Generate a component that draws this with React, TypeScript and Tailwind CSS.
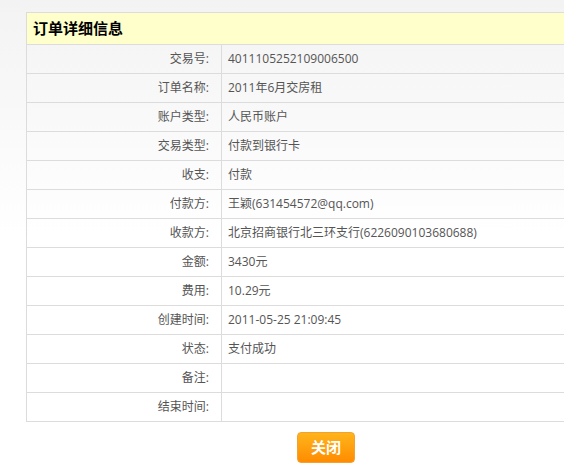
import React from "react"

const rows: [string, string][] = [
	["交易号", "4011105252109006500"],
	["订单名称", "2011年6月交房租"],
	["账户类型", "人民币账户"],
	["交易类型", "付款到银行卡"],
	["收支", "付款"],
	["付款方", "王颖(631454572@qq.com)"],
	["收款方", "北京招商银行北三环支行(6226090103680688)"],
	["金额", "3430元"],
	["费用", "10.29元"],
	["创建时间", "2011-05-25 21:09:45"],
	["状态", "支付成功"],
	["备注", ""],
	["结束时间", ""],
]

export default function App() {
	return (
		<div
			className="w-[564px] h-[475px] overflow-hidden bg-gradient-to-b from-[#f3f3f3] via-white to-white text-[12px] text-[#555]"
			style={{ fontFamily: '"Open Sans", "Noto Sans CJK SC", sans-serif' }}
		>
			<div className="pt-[12px] pl-[26px]">
				{/* detail table */}
				<div className="w-[560px] border-t border-l border-[#dcdcdc]">
					<div className="h-[32px] bg-[#ffffcc] border-b border-[#dcdcdc] flex items-center pl-[6px]">
						<span className="text-[15px] font-bold text-black leading-none">订单详细信息</span>
					</div>
					{rows.map(([label, value]) => (
						<div key={label} className="flex h-[29px] border-b border-[#dcdcdc]">
							<div className="w-[195px] shrink-0 border-r border-[#dcdcdc] flex items-center justify-end pr-[12px]">
								{label}:
							</div>
							<div className="flex items-center pl-[6px] whitespace-nowrap">{value}</div>
						</div>
					))}
				</div>
			</div>

			<div className="flex justify-center pt-[10px] pl-[88px]">
				<button className="w-[58px] h-[31px] rounded-[4px] border border-[#f2a230] bg-gradient-to-b from-[#ffb41a] to-[#ff8c00] text-white text-[15px] font-bold leading-none">
					关闭
				</button>
			</div>
		</div>
	)
}
